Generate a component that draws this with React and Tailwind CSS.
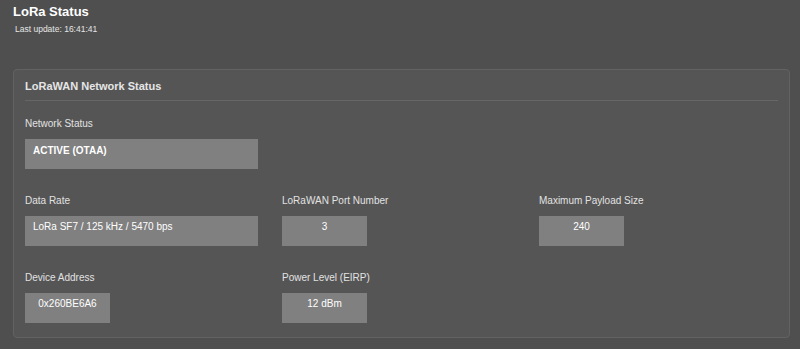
const fields = [
  [
    { label: 'Network Status', value: 'ACTIVE (OTAA)', wide: true, bold: true },
  ],
  [
    { label: 'Data Rate', value: 'LoRa SF7 / 125 kHz / 5470 bps', wide: true },
    { label: 'LoRaWAN Port Number', value: '3' },
    { label: 'Maximum Payload Size', value: '240' },
  ],
  [
    { label: 'Device Address', value: '0x260BE6A6' },
    { label: 'Power Level (EIRP)', value: '12 dBm' },
  ],
];

function Field({ label, value, wide, bold }) {
  return (
    <div className="flex flex-col">
      <div className="h-[12px] text-[10px] leading-[12px] text-[#e2e2e2]">{label}</div>
      <div
        className={
          wide
            ? 'mt-[9px] h-[30px] w-[233px] bg-[#808080] px-[8px] text-left text-[10px] leading-[12px] text-white'
            : 'mt-[9px] h-[30px] w-[85px] bg-[#808080] pt-[5px] text-center text-[10px] leading-[12px] text-white'
        }
      >
        <div className={bold ? 'pt-[6px] font-bold' : wide ? 'pt-[5px]' : ''}>{value}</div>
      </div>
    </div>
  );
}

export default function App() {
  return (
    <div className="min-h-[349px] w-[800px] bg-[#4f4f4f] px-[13px] pt-[4px] font-['Liberation_Sans',Arial,sans-serif]">
      <h1 className="text-[13px] font-bold leading-[16px] text-white">LoRa Status</h1>
      <p className="ml-[2px] mt-[4px] text-[8.5px] leading-[10px] text-[#e6e6e6]">Last update: 16:41:41</p>

      <div className="mt-[35px] w-[777px] rounded-[4px] border border-[#626262] bg-[#555555] px-[11px] pb-[14px] pt-[10px]">
        <div className="border-b border-[#666666] pb-[7px] text-[11px] font-bold leading-[13px] text-[#e6e6e6]">
          LoRaWAN Network Status
        </div>
        <div className="mt-[17px] flex flex-col gap-[26px]">
          {fields.map((row, i) => (
            <div key={i} className="grid grid-cols-[233px_233px_233px] gap-x-[24px]">
              {row.map((f) => (
                <Field key={f.label} {...f} />
              ))}
            </div>
          ))}
        </div>
      </div>
    </div>
  );
}
